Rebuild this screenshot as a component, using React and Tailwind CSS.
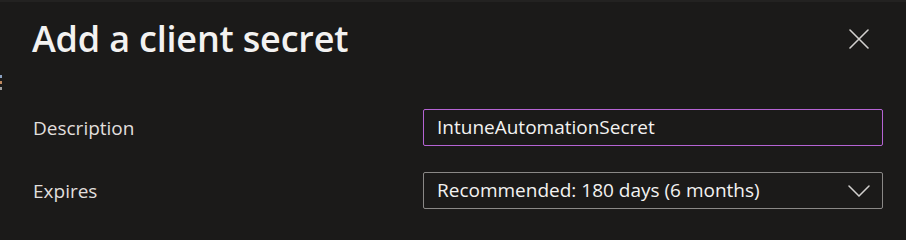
export default function App() {
  return (
    <div
      className="w-[906px] h-[240px] bg-[#1b1a19] relative overflow-hidden text-[#f3f2f1]"
      style={{ fontFamily: '"Open Sans", "Noto Sans", sans-serif' }}
    >
      <div className="h-[2px] bg-[#232221]" />
      <div className="absolute left-0 top-[75px] flex flex-col gap-[3px]">
        <div className="w-[2px] h-[3px] bg-[#8aa0c0]" />
        <div className="w-[2px] h-[3px] bg-[#c08a60]" />
        <div className="w-[2px] h-[3px] bg-[#a0a0a0]" />
      </div>
      <div className="flex items-start justify-between pl-[32px] pr-[37px] pt-[14px]">
        <h1 className="text-[36px] font-semibold leading-[46px] tracking-[-0.2px]">Add a client secret</h1>
        <button className="mt-[13px] w-[20px] h-[20px] flex items-center justify-center">
          <svg width="20" height="20" viewBox="0 0 20 20" fill="none" stroke="#d2d0ce" strokeWidth="1.6" strokeLinecap="round">
            <path d="M1 1 L19 19 M19 1 L1 19" />
          </svg>
        </button>
      </div>
      <div className="flex flex-col gap-[26px] pl-[33px] pr-[23px] pt-[47px]">
        <div className="flex items-center">
          <div className="w-[390px] text-[19px] text-[#e1dfdd] pt-[2px]">Description</div>
          <div className="flex-1 h-[37px] border border-[#b564d4] rounded-[2px] flex items-center px-[13px] text-[19px] text-[#f3f2f1]">
            IntuneAutomationSecret
          </div>
        </div>
        <div className="flex items-center">
          <div className="w-[390px] text-[19px] text-[#e1dfdd] pt-[2px]">Expires</div>
          <div className="flex-1 h-[37px] border border-[#8a8886] rounded-[2px] flex items-center justify-between pl-[13px] pr-[12px] text-[19px] text-[#f3f2f1]">
            <span>Recommended: 180 days (6 months)</span>
            <svg width="22" height="12" viewBox="0 0 22 12" fill="none" stroke="#d2d0ce" strokeWidth="1.5" strokeLinecap="round">
              <path d="M1 1 L11 11 L21 1" />
            </svg>
          </div>
        </div>
      </div>
    </div>
  );
}
